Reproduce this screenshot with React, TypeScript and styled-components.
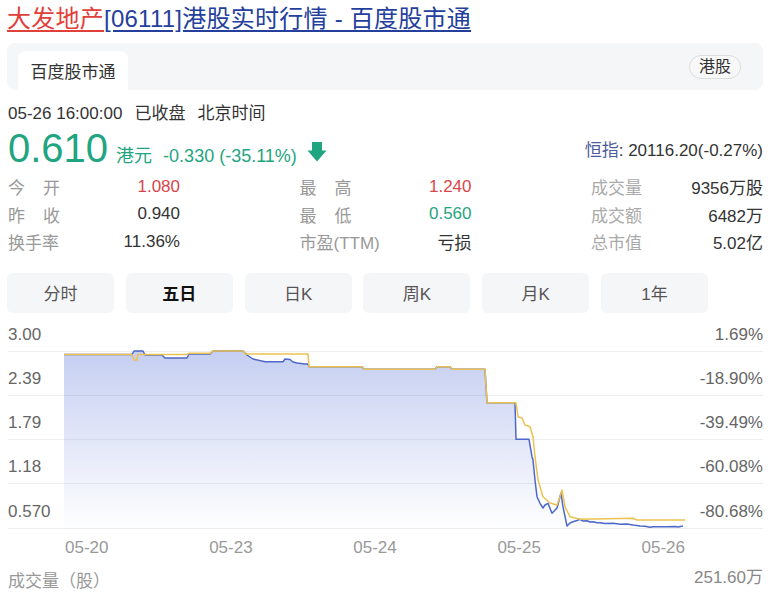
import React from 'react'
import styled, { createGlobalStyle } from 'styled-components'

const GlobalStyle = createGlobalStyle`
    body {
        margin: 0;
        background: #fff;
        font-family: "Liberation Sans", Arial, "Noto Sans CJK SC", sans-serif;
        color: #333;
    }
`

const stats = [
    [
        { label: '今开', value: '1.080', tone: 'up' },
        { label: '最高', value: '1.240', tone: 'up' },
        { label: '成交量', value: '9356万股', tone: '', light: true },
    ],
    [
        { label: '昨收', value: '0.940', tone: '' },
        { label: '最低', value: '0.560', tone: 'down' },
        { label: '成交额', value: '6482万', tone: '', light: true },
    ],
    [
        { label: '换手率', value: '11.36%', tone: '' },
        { label: '市盈(TTM)', value: '亏损', tone: '' },
        { label: '总市值', value: '5.02亿', tone: '', light: true },
    ],
]

const periods = ['分时', '五日', '日K', '周K', '月K', '1年']

const axisRows = [
    ['3.00', '1.69%'],
    ['2.39', '-18.90%'],
    ['1.79', '-39.49%'],
    ['1.18', '-60.08%'],
    ['0.570', '-80.68%'],
]

const days = ['05-20', '05-23', '05-24', '05-25', '05-26']

const priceLine = [
    [64, 354.5], [132, 354.5], [134, 351], [143, 351], [145, 355], [162, 355], [165, 358],
    [187, 358], [189, 354], [210, 354], [213, 351], [243, 351], [247, 355], [253, 359],
    [265, 361.7], [283, 361.7], [285, 359], [290, 359.5], [293, 362], [297, 363], [305, 364],
    [308, 364], [309, 366.7], [362, 366.7], [364, 369.3], [435, 369.3], [437, 366.7],
    [450, 366.7], [452, 369.3], [485, 369.3], [487, 402.7], [515, 402.7], [516, 439.3],
    [529, 439.3], [532, 456.7], [533, 460], [535, 480], [537, 496.7], [540, 503.3],
    [543, 508], [545, 505], [548, 503.3], [552, 513.3], [557, 508], [561, 493], [563, 506.7],
    [567, 526], [570, 523], [573, 521.7], [577, 520.5], [580, 519.3], [583, 521], [587, 520.7],
    [590, 522], [593, 521.7], [597, 522.8], [600, 522.7], [605, 523.6], [613, 523.3],
    [620, 524.2], [627, 524], [633, 525], [640, 526], [645, 526.2], [650, 527.3],
    [653, 526.7], [667, 526.7], [675, 526.4], [678, 527], [683, 526],
]

const avgLine = [
    [64, 354.5], [132, 354.5], [134, 360], [137, 360], [138, 354.5], [187, 354.5],
    [189, 353.3], [210, 353.3], [213, 351], [243, 351], [245, 354], [308, 354],
    [309, 366.7], [362, 366.7], [364, 369.3], [435, 369.3], [437, 366.7], [450, 366.7],
    [452, 369.3], [485, 369.3], [487, 402.7], [516, 402.7], [518, 416.7], [522, 418],
    [525, 425], [530, 426.7], [533, 436.7], [535, 456.7], [538, 480], [543, 496.7],
    [550, 503], [557, 505], [560, 496.7], [562, 490], [565, 506.7], [570, 516.7],
    [580, 519.3], [633, 518.3], [637, 520], [685, 520],
]

const toPoints = (pts: number[][]) => pts.map(p => p.join(',')).join(' ')

export default function App(){
    const fill = toPoints([...priceLine, [683, 529], [64, 529]])

    return (
        <Page>
            <GlobalStyle />
            <Title>
                <TitleRed>大发地产</TitleRed>
                <TitleBlue>[06111]港股实时行情 - 百度股市通</TitleBlue>
            </Title>

            <TabBar>
                <SourceTab>百度股市通</SourceTab>
                <MarketPill>港股</MarketPill>
            </TabBar>

            <TimeRow>
                <span>05-26 16:00:00</span>
                <span>已收盘</span>
                <span>北京时间</span>
            </TimeRow>

            <PriceRow>
                <PriceGroup>
                    <Price>0.610</Price>
                    <Currency>港元</Currency>
                    <Change>-0.330 (-35.11%)</Change>
                    <Arrow width="20" height="20" viewBox="0 0 20 20">
                        <path d="M5 0 H15 V8.5 H19.5 L10 19.5 L0.5 8.5 H5 Z" fill="#1fa57f" />
                    </Arrow>
                </PriceGroup>
                <IndexText><IndexName>恒指</IndexName>: 20116.20(-0.27%)</IndexText>
            </PriceRow>

            <StatsGrid>
                {stats.map((row, i) => row.map((cell, j) => (
                    <StatCell key={i + '-' + j}>
                        {cell.label.length === 2 ? (
                            <SpreadLabel $light={cell.light}>
                                {cell.label.split('').map((c, k) => <span key={k}>{c}</span>)}
                            </SpreadLabel>
                        ) : (
                            <StatLabel $light={cell.light}>{cell.label}</StatLabel>
                        )}
                        <StatValue $tone={cell.tone}>{cell.value}</StatValue>
                    </StatCell>
                )))}
            </StatsGrid>

            <PeriodTabs>
                {periods.map(p => (
                    <PeriodButton key={p} $active={p === '五日'}>{p}</PeriodButton>
                ))}
            </PeriodTabs>

            <ChartArea>
                {axisRows.map(([left, right], i) => (
                    <GridRow key={left} $first={i === 0}>
                        <AxisLabel>{left}</AxisLabel>
                        <AxisLabel>{right}</AxisLabel>
                    </GridRow>
                ))}
                <ChartSvg width="755" height="206" viewBox="8 324 755 206">
                    <defs>
                        <linearGradient id="area" x1="0" y1="350" x2="0" y2="530" gradientUnits="userSpaceOnUse">
                            <stop offset="0" stopColor="#5470d6" stopOpacity="0.34" />
                            <stop offset="1" stopColor="#5470d6" stopOpacity="0" />
                        </linearGradient>
                    </defs>
                    <polygon points={fill} fill="url(#area)" />
                    <polyline points={toPoints(priceLine)} fill="none" stroke="#4d68c9" strokeWidth="1.5" strokeLinejoin="round" />
                    <polyline points={toPoints(avgLine)} fill="none" stroke="#ebc252" strokeWidth="1.5" strokeLinejoin="round" />
                </ChartSvg>
            </ChartArea>

            <XAxis>
                {days.map(d => <XLabel key={d}>{d}</XLabel>)}
            </XAxis>

            <VolumeRow>
                <VolumeLabel>成交量（股）</VolumeLabel>
                <VolumeValue>251.60万</VolumeValue>
            </VolumeRow>
        </Page>
    )
}

const Page = styled.div`
    width: 773px;
    box-sizing: border-box;
    padding: 0 10px 0 8px;
`

const Title = styled.div`
    margin-left: -1px;
    padding-top: 4px;
    font-size: 24px;
    line-height: 30px;
    letter-spacing: 0.25px;
    white-space: nowrap;
`

const TitleRed = styled.span`
    color: #e0403a;
    text-decoration: underline;
    text-underline-offset: 3px;
`

const TitleBlue = styled.span`
    color: #24409c;
    text-decoration: underline;
    text-underline-offset: 3px;
`

const TabBar = styled.div`
    margin: 9px 0 0 -1px;
    height: 47px;
    background: #f5f6f8;
    border-radius: 8px;
    display: flex;
    align-items: flex-end;
    justify-content: space-between;
    padding: 0 22px 0 11px;
`

const SourceTab = styled.div`
    width: 110px;
    height: 39px;
    background: #fff;
    border-radius: 8px 8px 0 0;
    display: flex;
    align-items: center;
    justify-content: center;
    font-size: 17px;
    color: #333;
`

const MarketPill = styled.div`
    align-self: center;
    height: 22px;
    padding: 0 9px;
    border: 1px solid #dcdcdc;
    border-radius: 12px;
    background: #f8f8f8;
    font-size: 16px;
    line-height: 22px;
    color: #333;
`

const TimeRow = styled.div`
    margin-top: 14px;
    display: flex;
    gap: 12px;
    font-size: 17px;
    line-height: 20px;
    color: #333;
`

const PriceRow = styled.div`
    margin-top: 4px;
    display: flex;
    justify-content: space-between;
    align-items: center;
`

const PriceGroup = styled.div`
    display: flex;
    align-items: baseline;
`

const Price = styled.span`
    font-size: 40px;
    line-height: 40px;
    color: #1fa57f;
`

const Currency = styled.span`
    margin-left: 8px;
    font-size: 18px;
    color: #1fa57f;
`

const Change = styled.span`
    margin-left: 11px;
    font-size: 18px;
    color: #1fa57f;
`

const Arrow = styled.svg`
    margin-left: 10px;
    align-self: flex-end;
    margin-bottom: 6px;
`

const IndexText = styled.div`
    font-size: 17px;
    color: #333;
`

const IndexName = styled.span`
    color: #4b5c9c;
`

const StatsGrid = styled.div`
    margin-top: 5px;
    display: grid;
    grid-template-columns: repeat(3, 172px);
    grid-auto-rows: 27.5px;
    justify-content: space-between;
`

const StatCell = styled.div`
    display: flex;
    align-items: center;
    justify-content: space-between;
    font-size: 17px;
`

const StatLabel = styled.span<{ $light?: boolean }>`
    color: ${p => p.$light ? '#aaa' : '#999'};
`

const SpreadLabel = styled.span<{ $light?: boolean }>`
    width: 52px;
    display: flex;
    justify-content: space-between;
    color: ${p => p.$light ? '#aaa' : '#999'};
`

const StatValue = styled.span<{ $tone: string }>`
    color: ${p => p.$tone === 'up' ? '#d9454a' : p.$tone === 'down' ? '#1fa57f' : '#333'};
`

const PeriodTabs = styled.div`
    margin: 17px 0 0 -1px;
    display: flex;
    gap: 11.8px;
`

const PeriodButton = styled.div<{ $active?: boolean }>`
    width: 107px;
    height: 40px;
    border-radius: 6px;
    background: #f5f6f8;
    display: flex;
    align-items: center;
    justify-content: center;
    font-size: 17px;
    font-weight: ${p => p.$active ? 700 : 400};
    color: ${p => p.$active ? '#111' : '#555'};
`

const ChartArea = styled.div`
    position: relative;
    margin-top: 11px;
`

const GridRow = styled.div<{ $first?: boolean }>`
    height: ${p => p.$first ? '28px' : '44.25px'};
    box-sizing: border-box;
    border-bottom: 1px solid #eeeeee;
    display: flex;
    align-items: flex-end;
    justify-content: space-between;
`

const AxisLabel = styled.span`
    font-size: 17px;
    line-height: 16px;
    padding-bottom: 8px;
    color: #666;
`

const ChartSvg = styled.svg`
    position: absolute;
    top: 0;
    left: 0;
    pointer-events: none;
    overflow: visible;
`

const XAxis = styled.div`
    margin: 9px 0 0 57px;
    width: 620px;
    display: flex;
    justify-content: space-between;
    font-size: 17px;
    line-height: 20px;
    color: #999;
`

const XLabel = styled.span``

const VolumeRow = styled.div`
    margin-top: 10px;
    display: flex;
    justify-content: space-between;
    align-items: flex-end;
    font-size: 17px;
    line-height: 20px;
`

const VolumeLabel = styled.span`
    color: #999;
`

const VolumeValue = styled.span`
    color: #888;
    margin-bottom: 4px;
`
